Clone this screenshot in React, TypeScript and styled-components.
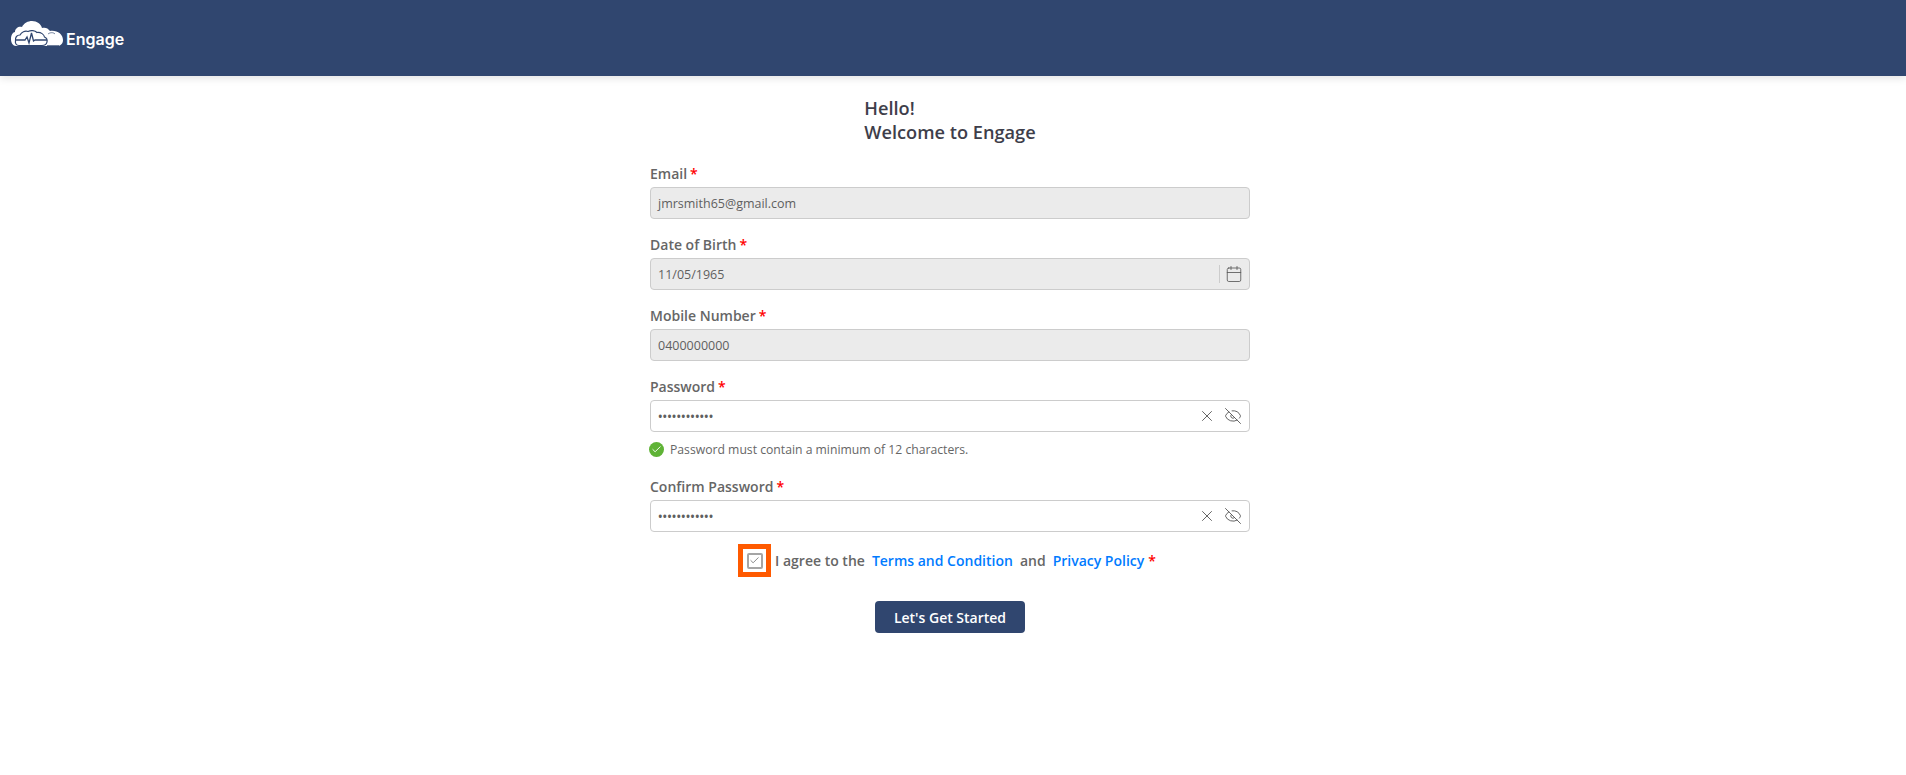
import styled, { createGlobalStyle } from "styled-components";
import { Calendar, Check, EyeOff, X } from "lucide-react";

const GlobalStyle = createGlobalStyle`
  html, body {
    margin: 0;
    padding: 0;
    background: #fff;
    font-family: "Open Sans", "Liberation Sans", sans-serif;
  }
  * {
    box-sizing: border-box;
  }
`;

function Logo() {
  return (
    <LogoMark width="52" height="27" viewBox="0 0 52 27" aria-hidden="true">
      {/* back cloud */}
      <path
        d="M4 12C4 8 8 6 11 7 13 3 17 1 21 1c5 0 9 3 10 7 3-1 6 0 8 3 7-1 13 3 13 9 0 4-3 6-6 6H5c-3 0-5-3-5-7s2-7 4-7z"
        fill="#fff"
      />
      {/* front cloud */}
      <path
        d="M8 25.500c-3 0-4-2.500-3.500-4.500C4 17 6 15 9 15c1.500-3 5-4.500 8-3.500 3-1.500 7-1 9 1 4-.5 7 2 7.500 4.500 2 1 3 3 2.500 5-.5 2.500-3 3.500-5 3.500z"
        fill="#fff"
        stroke="#30466f"
        strokeWidth="1.2"
      />
      <path
        d="M4.500 20H14l2-3 2 6 2.500-10 2 8 1.500-1H36"
        fill="none"
        stroke="#30466f"
        strokeWidth="1.3"
      />
      <path
        d="M36 25.500H48M37 14c2-1.500 5-2 7 0"
        fill="none"
        stroke="#30466f"
        strokeWidth="0.7"
      />
    </LogoMark>
  );
}

function App() {
  return (
    <>
      <GlobalStyle />
      <Header>
        <Brand>
          <Logo />
          <BrandName>Engage</BrandName>
        </Brand>
      </Header>
      <Page>
        <Main>
          <Title>
            Hello!
            <br />
            Welcome to Engage
          </Title>
          <Form>
            <Field>
              <Label>
                Email<Required>*</Required>
              </Label>
              <InputBox $disabled>
                <Value>jmrsmith65@gmail.com</Value>
              </InputBox>
            </Field>
            <Field>
              <Label>
                Date of Birth<Required>*</Required>
              </Label>
              <InputBox $disabled>
                <Value>11/05/1965</Value>
                <Divider />
                <IconSlot>
                  <Calendar size={18} strokeWidth={1.1} />
                </IconSlot>
              </InputBox>
            </Field>
            <Field>
              <Label>
                Mobile Number<Required>*</Required>
              </Label>
              <InputBox $disabled>
                <Value>0400000000</Value>
              </InputBox>
            </Field>
            <Field $hint>
              <Label>
                Password<Required>*</Required>
              </Label>
              <InputBox>
                <Dots>••••••••••••</Dots>
                <ClearSlot>
                  <X size={18} strokeWidth={1.2} />
                </ClearSlot>
                <EyeSlot>
                  <EyeOff size={18} strokeWidth={1.2} />
                </EyeSlot>
              </InputBox>
              <Hint>
                <HintBadge>
                  <Check size={11} strokeWidth={2} color="#fff" />
                </HintBadge>
                Password must contain a minimum of 12 characters.
              </Hint>
            </Field>
            <Field>
              <Label>
                Confirm Password<Required>*</Required>
              </Label>
              <InputBox>
                <Dots>••••••••••••</Dots>
                <ClearSlot>
                  <X size={18} strokeWidth={1.2} />
                </ClearSlot>
                <EyeSlot>
                  <EyeOff size={18} strokeWidth={1.2} />
                </EyeSlot>
              </InputBox>
            </Field>
          </Form>
          <Agree>
            <Highlight>
              <CheckBox>
                <Check size={11} strokeWidth={1.5} color="#555" />
              </CheckBox>
            </Highlight>
            <AgreeText>I agree to the</AgreeText>
            <AgreeLink>Terms and Condition</AgreeLink>
            <AgreeText>and</AgreeText>
            <AgreeLink>Privacy Policy</AgreeLink>
            <AgreeStar>*</AgreeStar>
          </Agree>
          <StartButton>Let's Get Started</StartButton>
        </Main>
      </Page>
    </>
  );
}

export default App;

const Header = styled.header`
  height: 76px;
  background-color: #30466f;
  box-shadow: 0 2px 8px rgba(0, 0, 0, 0.12);
  display: flex;
  align-items: center;
  padding-left: 11px;
`;

const Brand = styled.div`
  display: flex;
  align-items: center;
  gap: 3px;
`;

const LogoMark = styled.svg`
  margin-bottom: 10px;
`;

const BrandName = styled.span`
  font-family: Inter, "Liberation Sans", sans-serif;
  font-size: 16px;
  font-weight: 600;
  color: #fff;
  padding-top: 1px;
`;

const Page = styled.div`
  padding-right: 6px;
`;

const Main = styled.main`
  width: 600px;
  margin: 0 auto;
  padding-top: 20px;
  display: flex;
  flex-direction: column;
`;

const Title = styled.h1`
  align-self: center;
  margin: 0 0 21px;
  font-size: 18.200px;
  line-height: 24px;
  font-weight: 600;
  color: #3e3e4a;
`;

const Form = styled.div`
  display: flex;
  flex-direction: column;
`;

const Field = styled.div<{ $hint?: boolean }>`
  margin-bottom: ${(props) => (props.$hint ? "12px" : "17px")};
`;

const Label = styled.label`
  display: block;
  height: 22px;
  line-height: 18px;
  font-size: 14px;
  font-weight: 600;
  color: #666;
`;

const Required = styled.span`
  margin-left: 3px;
  color: #f00;
  font-size: 14px;
  font-weight: 600;
`;

const InputBox = styled.div<{ $disabled?: boolean }>`
  height: 32px;
  display: flex;
  align-items: center;
  padding: 0 6px 0 7px;
  background-color: ${(props) => (props.$disabled ? "#ebebeb" : "#fff")};
  border: 1px solid #ccc;
  border-radius: 4px;
`;

const Value = styled.span`
  flex: 1;
  font-size: 12.500px;
  font-weight: 500;
  color: #5f5f5f;
`;

const Dots = styled(Value)`
  font-size: 12px;
  font-weight: 600;
  letter-spacing: 0.1px;
`;

const Divider = styled.span`
  width: 1px;
  height: 18px;
  background-color: #ccc;
  margin-right: 5px;
`;

const IconSlot = styled.span`
  display: flex;
  color: #555;
`;

const ClearSlot = styled(IconSlot)`
  margin-right: 8px;
`;

const EyeSlot = styled(IconSlot)`
  margin-right: 1px;
`;

const Hint = styled.div`
  height: 34px;
  display: flex;
  align-items: center;
  margin-left: -1px;
  font-size: 12.200px;
  color: #666;
`;

const HintBadge = styled.span`
  width: 15px;
  height: 15px;
  margin-right: 6px;
  border-radius: 50%;
  background-color: #5fb336;
  display: flex;
  align-items: center;
  justify-content: center;
`;

const Agree = styled.div`
  align-self: center;
  height: 33px;
  margin-top: -5px;
  margin-left: -6px;
  display: flex;
  align-items: center;
  gap: 7px;
  font-size: 14px;
  font-weight: 600;
`;

const Highlight = styled.span`
  width: 33px;
  height: 33px;
  margin-right: -3px;
  border: 5px solid #ff5a00;
  display: flex;
  align-items: center;
  justify-content: center;
`;

const CheckBox = styled.span`
  width: 16px;
  height: 16px;
  border: 2px solid #a5a5a5;
  border-radius: 2px;
  display: flex;
  align-items: center;
  justify-content: center;
`;

const AgreeText = styled.span`
  color: #666;
`;

const AgreeLink = styled.a`
  color: #007bff;
`;

const AgreeStar = styled(Required)`
  margin-left: -3px;
`;

const StartButton = styled.button`
  align-self: center;
  width: 150px;
  height: 32px;
  margin-top: 24px;
  background-color: #30466f;
  border: none;
  border-radius: 4px;
  color: #fff;
  font-family: inherit;
  font-size: 14px;
  font-weight: 600;
`;
